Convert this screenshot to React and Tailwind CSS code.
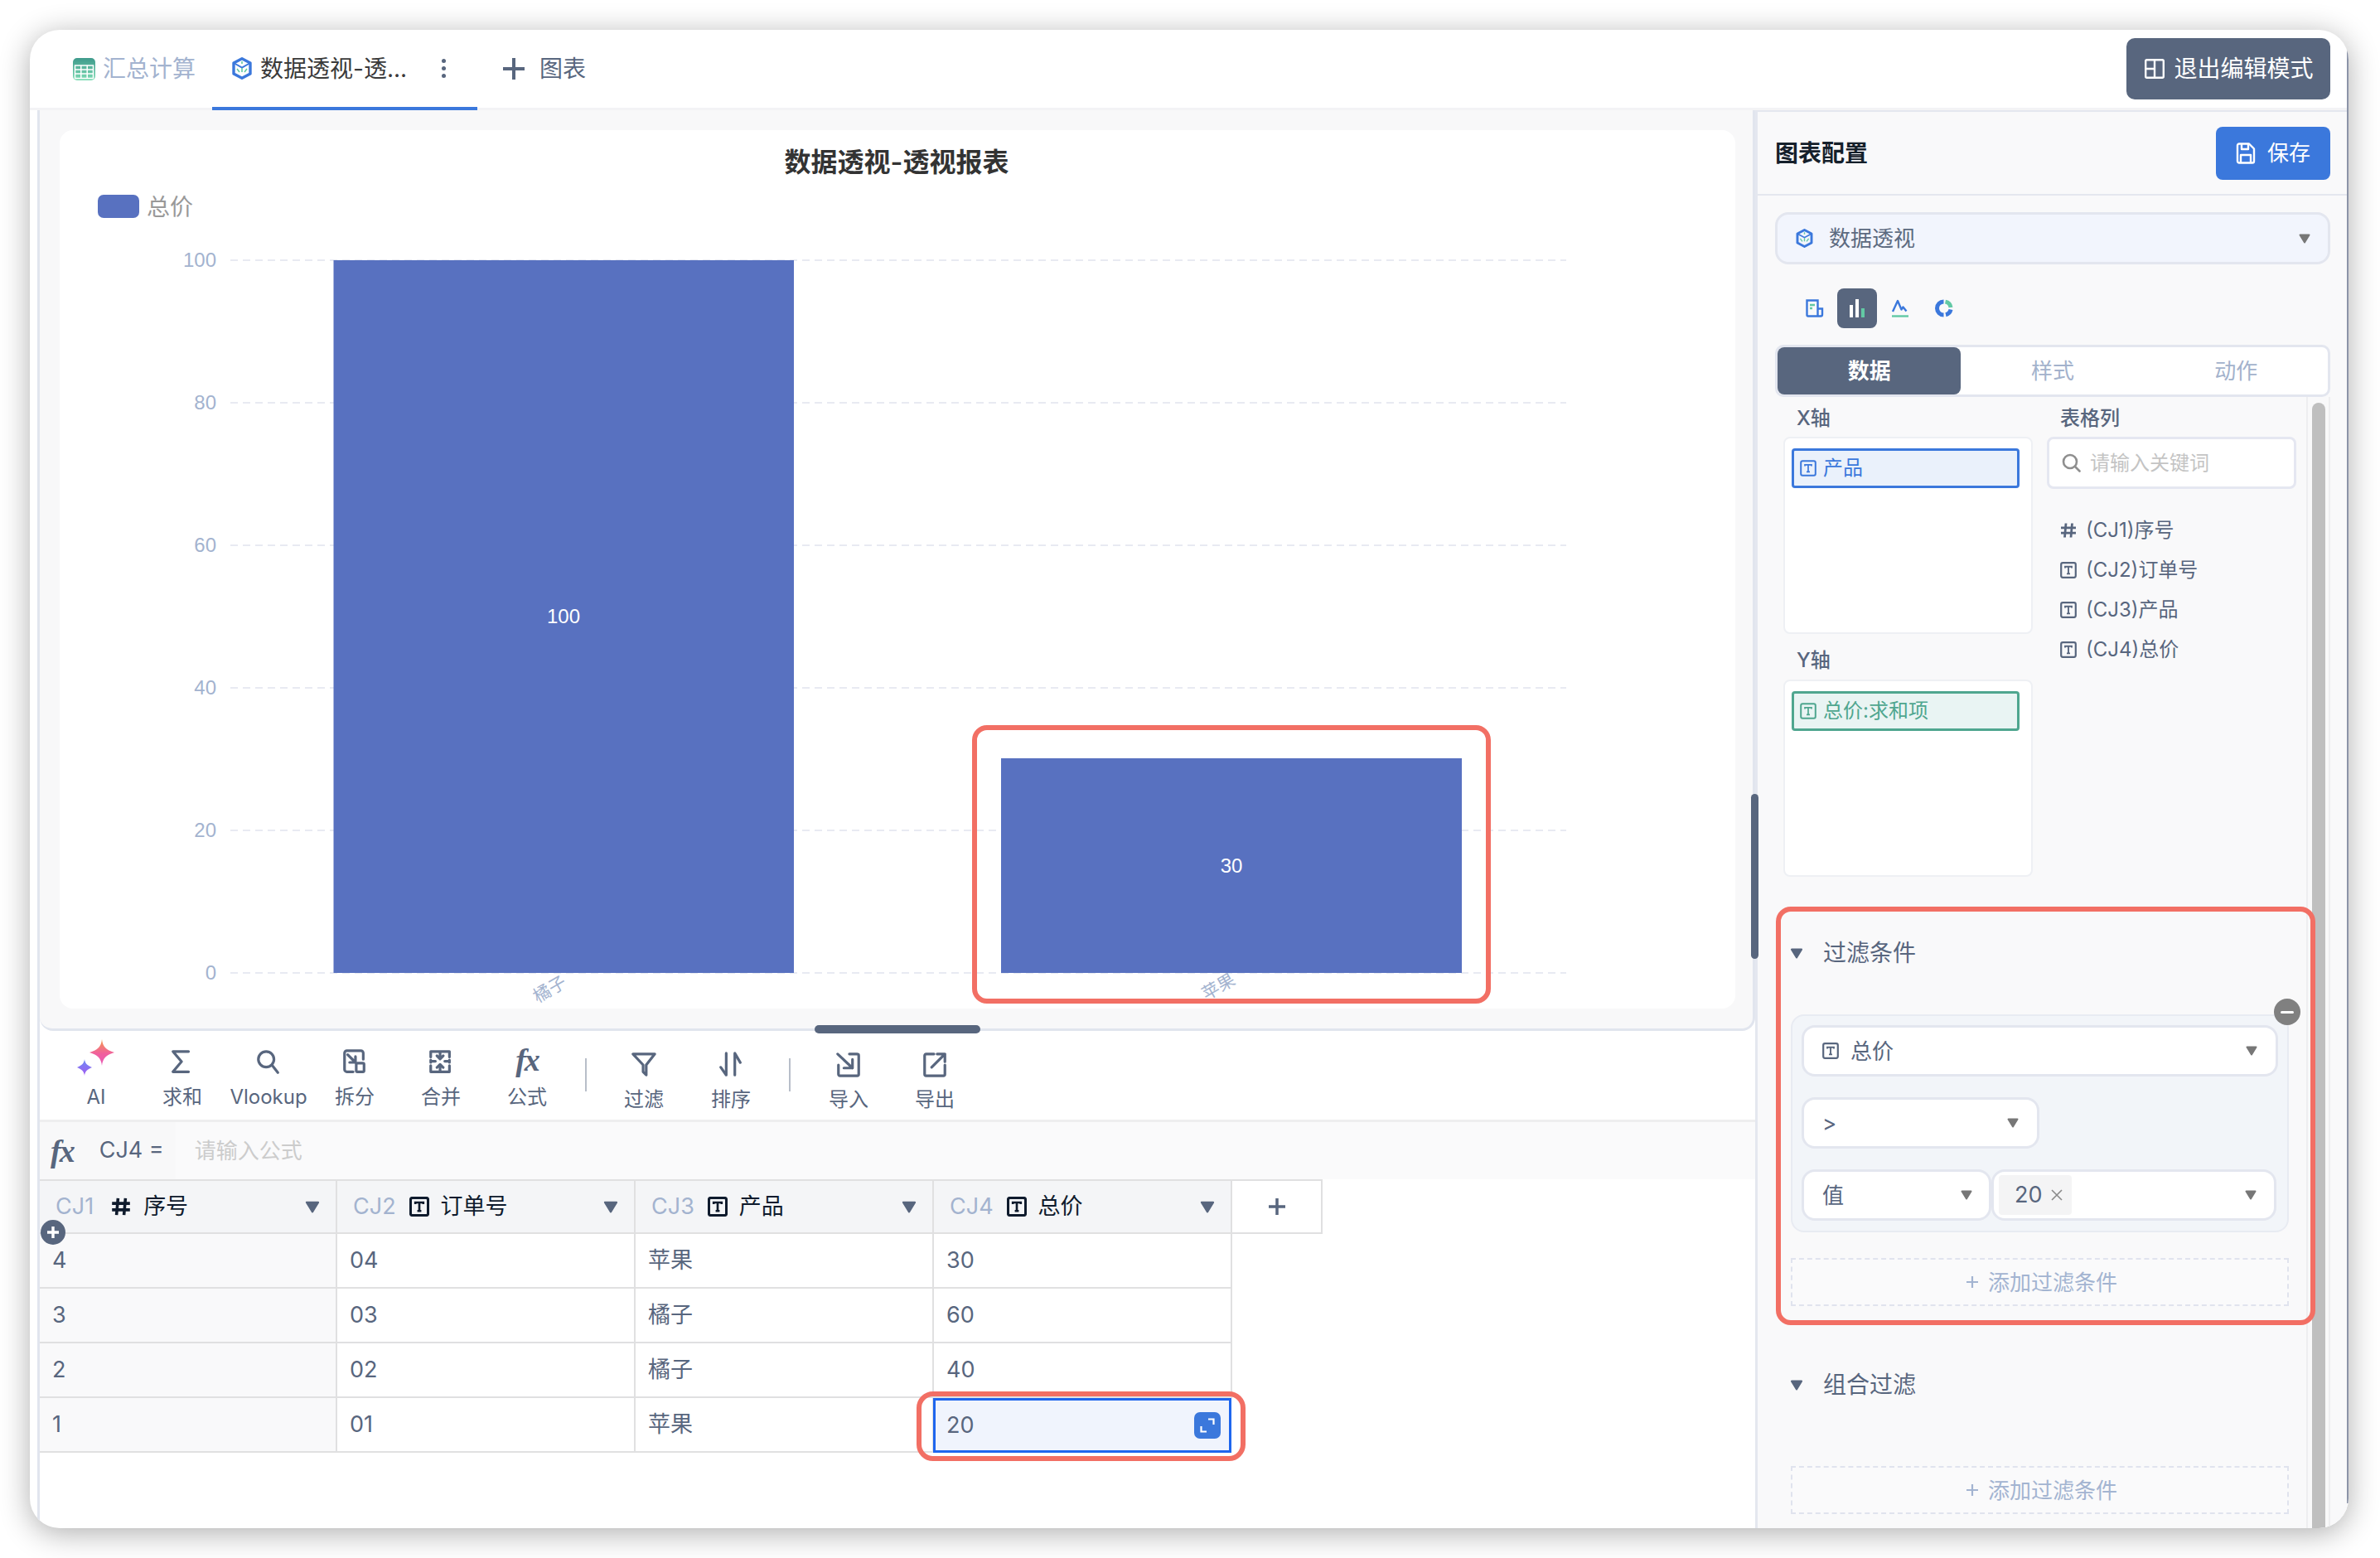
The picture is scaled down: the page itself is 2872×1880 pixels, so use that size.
const slate = "#58667e";

function TIcon({ size = 20, weight = 2 }) {
  return (
    <svg width={size} height={size} viewBox="0 0 20 20" fill="none" stroke="currentColor" strokeWidth={weight} className="shrink-0">
      <rect x="1.2" y="1.2" width="17.6" height="17.6" rx="2" />
      <path d="M6 7.6V5.8h8v1.8M10 5.8v8.6M8 14.4h4" strokeWidth={weight * 0.85} />
    </svg>
  );
}

function HashIcon({ size = 20, weight = 2.8 }) {
  return (
    <svg width={size} height={size} viewBox="0 0 20 20" fill="none" stroke="currentColor" strokeWidth={weight} className="shrink-0">
      <path d="M7 1.5 5.5 18.5M14.5 1.5 13 18.5M1 6.8h18M1 13.2h18" />
    </svg>
  );
}

function Caret({ w = 14, h = 12, color = "#777777" }) {
  return (
    <svg width={w} height={h} viewBox="0 0 14 12" className="shrink-0">
      <path d="M1.5 1.5h11L7 10.5Z" fill={color} stroke={color} strokeWidth="2" strokeLinejoin="round" />
    </svg>
  );
}

function CubeIcon({ w = 24, h = 27 }) {
  return (
    <svg width={w} height={h} viewBox="0 0 24 27" fill="none" className="shrink-0">
      <path d="M12 1.8 22 7v13l-10 5.2L2 20V7Z" stroke="#3b78dc" strokeWidth="3.400" strokeLinejoin="round" />
      <path d="M3 7.5 12 12.5 21 7.5" stroke="#3b78dc" strokeWidth="2" />
      <path d="M12 13v5M6 14l3 4M18 14l-3 4M12 5v3" stroke="#62c9a4" strokeWidth="1.6" />
    </svg>
  );
}

function SheetIcon() {
  return (
    <svg width="27" height="27" viewBox="0 0 27 27" className="shrink-0">
      <defs>
        <linearGradient id="sheet" x1="0" y1="0" x2="0" y2="1">
          <stop offset="0" stopColor="#3f9a8c" />
          <stop offset="1" stopColor="#7edcb4" />
        </linearGradient>
      </defs>
      <rect width="27" height="27" rx="5" fill="url(#sheet)" />
      <path d="M2.5 9h22v15.5h-22zM2.5 14h22M2.5 19h22M9.8 9v15.5M17.2 9v15.5" fill="none" stroke="#ffffff" strokeWidth="1.5" />
    </svg>
  );
}

function Sparkle() {
  return (
    <svg width="46" height="44" viewBox="0 0 46 44">
      <defs>
        <linearGradient id="star1" x1="0" y1="0" x2="0" y2="1">
          <stop offset="0" stopColor="#f59a4a" />
          <stop offset="0.55" stopColor="#f0609e" />
          <stop offset="1" stopColor="#e85ab8" />
        </linearGradient>
        <linearGradient id="star2" x1="0" y1="0" x2="0" y2="1">
          <stop offset="0" stopColor="#6c8cf5" />
          <stop offset="1" stopColor="#a35af0" />
        </linearGradient>
      </defs>
      <path d="M30 0C31 9 35 13 45 16 35 19 31 23 30 32 29 23 25 19 15 16 25 13 29 9 30 0Z" fill="url(#star1)" />
      <path d="M9 24C9.6 29 12 31.5 18 34 12 36.5 9.6 39 9 44 8.4 39 6 36.5 0 34 6 31.5 8.4 29 9 24Z" fill="url(#star2)" />
    </svg>
  );
}

function ToolIcon({ name }) {
  const paths = {
    sum: <path d="M24 3H4l11 13L4 29h20" />,
    search: (
      <>
        <circle cx="13" cy="13" r="10" />
        <path d="M20.5 20.5 28 30" />
      </>
    ),
    split: (
      <>
        <path d="M14 29H6a3 3 0 0 1-3-3V5a3 3 0 0 1 3-3h18a3 3 0 0 1 3 3v8" />
        <path d="M7 7l10 10M17 9.500V17H9.500" />
        <rect x="18" y="18" width="10" height="11" rx="1.500" />
      </>
    ),
    merge: (
      <>
        <path d="M3 10V3h24v7M3 21v8h24v-8M3 14v3M27 14v3M3 15.500h6M21 15.500h6" />
        <path d="M15 4v8M11 8.500l4 4 4-4M15 28v-8M11 23.500l4-4 4 4" />
      </>
    ),
    filter: <path d="M2 3h28L19 17v13l-4-4V17Z" />,
    sort: <path d="M10 2v28L3 20M21 30V2l7 12" />,
    import: <path d="M17 3h10a2 2 0 0 1 2 2v24a2 2 0 0 1-2 2H5a2 2 0 0 1-2-2V17M2 3l19 18M21 10v11H10" />,
    export: <path d="M15 3H5a2 2 0 0 0-2 2v24a2 2 0 0 0 2 2h22a2 2 0 0 0 2-2V17M12 20 29 3M19 3h10v10" />,
  };
  return (
    <svg width="32" height="32" viewBox="0 0 32 34" fill="none" stroke={slate} strokeWidth="3.400" strokeLinejoin="round" strokeLinecap="round">
      {paths[name]}
    </svg>
  );
}

function FxMark({ size = "text-[38px]" }) {
  return <span className={`font-['Liberation_Serif',serif] italic font-bold ${size} leading-none text-[#58667e] tracking-[-2px]`}>fx</span>;
}

function ToolItem({ label, name, low }) {
  return (
    <div className={`w-[104px] flex flex-col items-center ${low ? "pt-[25px]" : "pt-[22px]"}`}>
      <div className="h-[32px] flex items-end justify-center">
        {name === "ai" ? <Sparkle /> : name === "fx" ? <FxMark /> : <ToolIcon name={name} />}
      </div>
      <span className="mt-[10px] text-[24px] leading-[32px] text-[#58667e]">{label}</span>
    </div>
  );
}

function Chart() {
  const grid = [
    { y: 1017, label: "0" },
    { y: 845, label: "20" },
    { y: 673, label: "40" },
    { y: 501, label: "60" },
    { y: 329, label: "80" },
    { y: 157, label: "100" },
  ];
  const sans = "Inter, 'Noto Sans CJK SC', sans-serif";
  return (
    <svg width="2022" height="1060" viewBox="0 0 2022 1060" fontFamily={sans}>
      <text x="1010" y="50" textAnchor="middle" fontSize="32" fontWeight="600" fill="#333333">数据透视-透视报表</text>
      <rect x="46" y="78" width="50" height="28" rx="7" fill="#5871c0" />
      <text x="105" y="103" fontSize="28" fill="#999999">总价</text>
      {grid.map((g) => (
        <g key={g.label}>
          <line x1="206" x2="1818" y1={g.y} y2={g.y} stroke="#e8eaf2" strokeWidth="2" strokeDasharray="9 6" />
          <text x="189" y={g.y + 8} textAnchor="end" fontSize="24" fontFamily="'Liberation Sans', sans-serif" fill="#a3b3cf">{g.label}</text>
        </g>
      ))}
      <rect x="330.500" y="157" width="555.500" height="860" fill="#5871c0" />
      <rect x="1136" y="758" width="556" height="259" fill="#5871c0" />
      <text x="608" y="595" textAnchor="middle" fontSize="24" fontFamily="'Liberation Sans', sans-serif" fill="#ffffff">100</text>
      <text x="1414" y="896" textAnchor="middle" fontSize="24" fontFamily="'Liberation Sans', sans-serif" fill="#ffffff">30</text>
      <text x="591" y="1044" textAnchor="middle" fontSize="21" fill="#a3b3cf" transform="rotate(-30 591 1036)">橘子</text>
      <text x="1398" y="1041" textAnchor="middle" fontSize="21" fill="#a3b3cf" transform="rotate(-30 1398 1033)">苹果</text>
    </svg>
  );
}

const columns = [
  { id: "CJ1", name: "序号", w: "w-[359px]", hash: true },
  { id: "CJ2", name: "订单号", w: "w-[360px]" },
  { id: "CJ3", name: "产品", w: "w-[360px]" },
  { id: "CJ4", name: "总价", w: "w-[360px]" },
];

const rows = [
  ["4", "04", "苹果", "30"],
  ["3", "03", "橘子", "60"],
  ["2", "02", "橘子", "40"],
  ["1", "01", "苹果", "20"],
];

function DataTable() {
  return (
    <div className="relative">
      <div className="flex w-fit h-[66px] border-t-2 border-b-2 border-[#e0e0e1]">
        {columns.map((c) => (
          <div key={c.id} className={`${c.w} bg-[#f4f5f7] border-r-2 border-[#e0e0e1] flex items-center pl-[19px] pr-[19px] text-[#0f1b2d]`}>
            <span className="text-[27px] text-[#a3b3cf]">{c.id}</span>
            <span className={c.hash ? "ml-[21px] mr-[15px]" : "ml-[16px] mr-[14px]"}>{c.hash ? <HashIcon size={24} weight={3} /> : <TIcon size={24} weight={2.6} />}</span>
            <span className="text-[27px]">{c.name}</span>
            <span className="ml-auto"><Caret w={18} h={15} color={slate} /></span>
          </div>
        ))}
        <div className="w-[109px] border-r-2 border-[#e0e0e1] flex items-center justify-center">
          <svg width="20" height="20" viewBox="0 0 20 20" stroke={slate} strokeWidth="3.500"><path d="M10 0v20M0 10h20" /></svg>
        </div>
      </div>
      {rows.map((r, i) => (
        <div key={r[0]} className="flex h-[66px]">
          {r.map((v, j) => {
            const selected = i === 3 && j === 3;
            return (
              <div
                key={j}
                className={`${columns[j].w} flex items-center text-[27px] text-[#58667e] ${
                  selected
                    ? "relative border-[3px] border-[#1f66ee] bg-[#f0f4fd] pr-[10px] justify-between -ml-[1px] pl-[13px]"
                    : `pl-[15px] border-r-2 border-b-2 border-[#e0e0e1] ${j === 0 ? "bg-[#f9f9fa]" : ""}`
                }`}
              >
                <span>{v}</span>
                {selected && (
                  <span className="w-[32px] h-[32px] rounded-[7px] bg-[#3b78dc] flex items-center justify-center">
                    <svg width="20" height="20" viewBox="0 0 20 20" fill="none" stroke="#ffffff" strokeWidth="2.200"><path d="M11 2.500h6.500V9M9 17.500H2.500V11" /></svg>
                  </span>
                )}
              </div>
            );
          })}
        </div>
      ))}
      {/* add-row dot sits over the header line */}
      <div className="absolute left-[1px] top-[49px] w-[30px] h-[30px] rounded-full bg-[#58667e] flex items-center justify-center">
        <svg width="16" height="16" viewBox="0 0 16 16" stroke="#ffffff" strokeWidth="3.400"><path d="M8 1v14M1 8h14" /></svg>
      </div>
      {/* annotation round the selected cell */}
      <div className="absolute left-[1058px] top-[256px] w-[397px] h-[84px] rounded-[20px] border-[6px] border-[#f26f64]" />
    </div>
  );
}

function Select({ className = "", children }) {
  return (
    <div className={`h-[62px] rounded-[16px] bg-white border-[3px] border-[#e3e6ef] flex items-center justify-between ${className}`}>
      {children}
    </div>
  );
}

function AddButton() {
  return (
    <div className="w-[601px] h-[58px] ml-[19px] border-[2px] border-dashed border-[#e0e3ee] bg-[#fafafb] flex items-center justify-center gap-[11px] pl-[4px] text-[26px] text-[#a3b4d1]">
      <svg width="16" height="16" viewBox="0 0 16 16" stroke="#a3b4d1" strokeWidth="2.200"><path d="M8 1v14M1 8h14" /></svg>
      <span>添加过滤条件</span>
    </div>
  );
}

function SectionTitle({ children, className = "" }) {
  return (
    <div className={`flex items-center h-[40px] pl-[18px] ${className}`}>
      <Caret w={16} h={13} color={slate} />
      <span className="ml-[24px] text-[28px] text-[#58667e]">{children}</span>
    </div>
  );
}

function FieldBox({ tone, label }) {
  return (
    <div className="w-[301px] h-[238px] bg-white border-2 border-[#eef0f4] rounded-[8px] pt-[12px] pl-[8px]">
      <div className={`w-[275px] h-[48px] rounded-[4px] border-[3px] flex items-center pl-[7px] gap-[8px] text-[24px] ${tone}`}>
        <TIcon size={20} weight={2} />
        <span>{label}</span>
      </div>
    </div>
  );
}

function Sidebar() {
  const list = [
    { label: "(CJ1)序号", hash: true },
    { label: "(CJ2)订单号" },
    { label: "(CJ3)产品" },
    { label: "(CJ4)总价" },
  ];
  return (
    <div className="relative w-[716px] h-full flex flex-col bg-[#f9f9fa] border-l-[3px] border-[#e4e7ef]">
      <div className="h-[103px] shrink-0 border-t-2 border-b-2 border-[#e4e7ef] flex items-center justify-between pl-[21px] pr-[22px]">
        <span className="text-[28px] font-semibold text-[#15202b]">图表配置</span>
        <div className="w-[138px] h-[64px] rounded-[8px] bg-[#3b78dc] flex items-center justify-center gap-[14px] text-white text-[26px]">
          <svg width="24" height="26" viewBox="0 0 24 26" fill="none" stroke="#ffffff" strokeWidth="2.400" strokeLinejoin="round">
            <path d="M2 3.500A2 2 0 0 1 4 1.500h12l6 6v15a2 2 0 0 1-2 2H4a2 2 0 0 1-2-2Z" />
            <path d="M7 2v6h8V2M6 24.500V15h12v9.500" />
          </svg>
          <span>保存</span>
        </div>
      </div>

      <div className="ml-[21px] mt-[20px] w-[670px] h-[63px] shrink-0 rounded-[16px] bg-[#f2f5fd] border-[3px] border-[#e3e6ef] flex items-center pl-[22px] pr-[21px] text-[26px] text-[#5c6a80]">
        <CubeIcon w={21} h={23} />
        <span className="ml-[19px]">数据透视</span>
        <span className="ml-auto"><Caret w={14} h={14} /></span>
      </div>

      <div className="ml-[58px] mt-[29px] h-[48px] shrink-0 flex items-center">
        <svg width="22" height="22" viewBox="0 0 22 22" fill="none" className="mr-[16px]">
          <path d="M14.500 20.500H3a1.500 1.500 0 0 1-1.500-1.500V1.500H14.500V20.500ZM14.500 11.500h5.500v7a2 2 0 0 1-2 2h-3.500" stroke="#3b78dc" strokeWidth="2.400" />
          <path d="M5 7h6M5 11h3" stroke="#62c9a4" strokeWidth="2.400" />
        </svg>
        <div className="w-[48px] h-[48px] rounded-[8px] bg-[#58667e] flex items-center justify-center">
          <svg width="20" height="22" viewBox="0 0 20 22">
            <rect x="1" y="7" width="4" height="15" fill="#ffffff" />
            <rect x="8" y="0" width="4" height="22" fill="#ffffff" />
            <rect x="15" y="11" width="4" height="11" fill="#62c9a4" />
          </svg>
        </div>
        <svg width="22" height="22" viewBox="0 0 22 22" fill="none" className="ml-[17px]">
          <path d="M2 15 8 2l4.500 10.500 2-3 4 5" stroke="#3b78dc" strokeWidth="2.400" strokeLinejoin="round" />
          <path d="M1 20.500h20" stroke="#62c9a4" strokeWidth="2.400" />
        </svg>
        <svg width="22" height="22" viewBox="0 0 22 22" fill="none" strokeWidth="5" className="ml-[31px]">
          <path d="M12.500 3.100A8 8 0 0 1 19 10" stroke="#62c9a4" />
          <path d="M19 12.500A8 8 0 0 1 13 18.700" stroke="#3b78dc" />
          <path d="M10.500 19A8 8 0 0 1 10.500 3" stroke="#3b78dc" />
        </svg>
      </div>

      <div className="ml-[21px] mt-[20px] w-[670px] h-[63px] shrink-0 rounded-[10px] bg-white border-[3px] border-[#e3e6ef] flex text-[26px] text-[#a3b2cc]">
        <div className="w-[222px] bg-[#58667e] rounded-[8px] text-white font-semibold flex items-center justify-center">数据</div>
        <div className="w-[222px] flex items-center justify-center">样式</div>
        <div className="w-[222px] flex items-center justify-center">动作</div>
      </div>

      <div className="flex flex-1 min-h-0 overflow-hidden">
        <div className="w-[641px] ml-[21px] shrink-0">
          <div className="pl-[10px] flex gap-[17px] h-[580px]">
            <div>
              <div className="h-[48px] pt-[4px] pl-[16px] flex items-center text-[24px] font-medium text-[#58667e]">X轴</div>
              <FieldBox tone="border-[#3b78dc] bg-[#eaf1fb] text-[#3b78dc]" label="产品" />
              <div className="h-[55px] pt-[9px] pl-[16px] flex items-center text-[24px] font-medium text-[#58667e]">Y轴</div>
              <FieldBox tone="border-[#4fa68f] bg-[#e9f4f3] text-[#4fa68f]" label="总价:求和项" />
            </div>
            <div>
              <div className="h-[48px] pt-[4px] pl-[16px] flex items-center text-[24px] font-medium text-[#58667e]">表格列</div>
              <div className="w-[301px] h-[63px] bg-white border-[3px] border-[#e5e7f1] rounded-[8px] flex items-center pl-[15px] gap-[11px] text-[24px] text-[#c4c4c4]">
                <svg width="23" height="23" viewBox="0 0 23 23" fill="none" stroke="#8f8f8f" strokeWidth="2.600" strokeLinecap="round">
                  <circle cx="10" cy="10" r="8" />
                  <path d="m16 16 5.500 5.500" />
                </svg>
                <span>请输入关键词</span>
              </div>
              <div className="mt-[26px]">
                {list.map((item) => (
                  <div key={item.label} className="h-[48px] pl-[16px] flex items-center gap-[11px] text-[24px] text-[#58667e]">
                    {item.hash ? <HashIcon size={20} /> : <TIcon size={20} weight={2.2} />}
                    <span>{item.label}</span>
                  </div>
                ))}
              </div>
            </div>
          </div>

          <SectionTitle className="mt-[71px]">过滤条件</SectionTitle>
          <div className="relative ml-[19px] mt-[54px] w-[601px] h-[263px] rounded-[16px] bg-[#f2f5f9] border-[2px] border-[#e8ebf2] pt-[11px] pl-[11px] flex flex-col gap-[25px] text-[26px] text-[#58667e]">
            <Select className="w-[575px] pl-[22px] pr-[22px]">
              <span className="flex items-center gap-[14px]"><TIcon size={20} weight={2.2} />总价</span>
              <Caret />
            </Select>
            <Select className="w-[287px] pl-[22px] pr-[22px]">
              <span>&gt;</span>
              <Caret />
            </Select>
            <div className="flex">
              <Select className="w-[229px] pl-[22px] pr-[20px]">
                <span>值</span>
                <Caret />
              </Select>
              <Select className="w-[344px] pl-[6px] pr-[21px]">
                <span className="w-[88px] h-[48px] rounded-[4px] bg-[#f4f4f5] flex items-center pl-[19px] gap-[10px] text-[27px]">
                  20
                  <svg width="14" height="14" viewBox="0 0 14 14" stroke="#8a8a8a" strokeWidth="1.600"><path d="m1 1 12 12M13 1 1 13" /></svg>
                </span>
                <Caret />
              </Select>
            </div>
            <div className="absolute -right-[16px] -top-[21px] w-[32px] h-[32px] rounded-full bg-[#808080] flex items-center justify-center">
              <span className="w-[16px] h-[3px] bg-white rounded-full" />
            </div>
          </div>
          <div className="mt-[31px]"><AddButton /></div>
          <SectionTitle className="mt-[75px]">组合过滤</SectionTitle>
          <div className="mt-[78px]"><AddButton /></div>
        </div>

        <div className="w-[29px] shrink-0 border-x-2 border-[#eeeef0] pl-[5px] pt-[7px]">
          <div className="w-[16px] h-[1400px] rounded-t-full bg-[#bfbfbf]" />
        </div>
      </div>

      {/* annotation round the filter section */}
      <div className="absolute left-[22px] top-[961px] w-[651px] h-[505px] rounded-[18px] border-[6px] border-[#f26f64]" />
    </div>
  );
}

export default function App() {
  return (
    <div className="w-[2872px] h-[1880px] bg-white pt-[36px] pl-[36px] overflow-hidden font-['Inter','Noto_Sans_CJK_SC',sans-serif]">
      <div className="relative w-[2798px] h-[1808px] rounded-[36px] overflow-hidden bg-white flex flex-col shadow-[0_6px_36px_rgba(0,0,0,0.32)]">
        <div className="h-[97px] shrink-0 border-b-[3px] border-[#f3f3f5] flex items-stretch pl-[52px] pr-[22px]">
          <div className="w-[168px] flex items-center text-[28px] text-[#a3b3cf] gap-[9px]">
            <SheetIcon />
            <span>汇总计算</span>
          </div>
          <div className="w-[320px] -mb-[3px] border-b-[4px] border-[#3b78dc] flex items-center pl-[24px] text-[28px] text-[#3a3a3a]">
            <CubeIcon />
            <span className="ml-[10px]">数据透视-透...</span>
            <span className="ml-[42px] flex flex-col gap-[4px]">
              <i className="w-[5px] h-[5px] rounded-full bg-[#58667e]" />
              <i className="w-[5px] h-[5px] rounded-full bg-[#58667e]" />
              <i className="w-[5px] h-[5px] rounded-full bg-[#58667e]" />
            </span>
          </div>
          <div className="ml-[31px] flex items-center gap-[18px] text-[28px] text-[#58667e]">
            <svg width="26" height="26" viewBox="0 0 26 26" stroke="#58667e" strokeWidth="4"><path d="M13 0v26M0 13h26" /></svg>
            <span>图表</span>
          </div>
          <div className="ml-auto mt-[10px] w-[246px] h-[74px] rounded-[10px] bg-[#58667e] flex items-center justify-center gap-[11px] pl-[2px] text-white text-[28px]">
            <svg width="24" height="24" viewBox="0 0 24 24" fill="none" stroke="#ffffff" strokeWidth="2.400">
              <rect x="1.200" y="1.200" width="21.600" height="21.600" rx="1.500" />
              <path d="M12 1v22M1 12h11" />
            </svg>
            <span>退出编辑模式</span>
          </div>
        </div>

        <div className="flex flex-1 min-h-0">
          <div className="relative z-10 w-[2082px] shrink-0 pl-[9px]">
            <div className="h-full border-l-[3px] border-[#e1e5ee] flex flex-col">
              <div className="relative h-[1111px] shrink-0 bg-[#f8f8f9] border-b-[3px] border-r-[3px] border-[#e1e5ee] rounded-bl-[16px] rounded-br-[16px] pt-[24px] pl-[24px]">
                <div className="relative w-[2022px] h-[1060px] bg-white rounded-[16px]">
                  <Chart />
                  <div className="absolute left-[1101px] top-[718px] w-[626px] h-[336px] rounded-[18px] border-[6px] border-[#f26f64]" />
                </div>
                <div className="absolute left-[935px] -bottom-[6px] w-[200px] h-[10px] rounded-full bg-[#58667e]" />
                <div className="absolute -right-[7px] top-[825px] w-[9px] h-[199px] rounded-full bg-[#58667e]" />
              </div>

              <div className="h-[110px] shrink-0 border-b-[3px] border-[#eeeeef] flex pl-[16px]">
                <ToolItem label="AI" name="ai" />
                <ToolItem label="求和" name="sum" />
                <ToolItem label="Vlookup" name="search" />
                <ToolItem label="拆分" name="split" />
                <ToolItem label="合并" name="merge" />
                <ToolItem label="公式" name="fx" />
                <div className="mt-[33px] ml-[18px] mr-[17px] w-[2px] h-[40px] bg-[#b8bec9]" />
                <ToolItem label="过滤" name="filter" low />
                <div className="w-[1px]" />
                <ToolItem label="排序" name="sort" low />
                <div className="mt-[33px] ml-[18px] mr-[18px] w-[2px] h-[40px] bg-[#b8bec9]" />
                <ToolItem label="导入" name="import" low />
                <ToolItem label="导出" name="export" low />
              </div>

              <div className="h-[69px] shrink-0 bg-[#f8f8f9] flex items-center pl-[13px]">
                <FxMark />
                <span className="ml-[31px] text-[27px] text-[#58667e]">CJ4 =</span>
                <span className="ml-[14px] pl-[23px] h-full flex items-center flex-1 bg-[#fafafb] text-[26px] text-[#cccccc]">请输入公式</span>
              </div>

              <DataTable />
            </div>
          </div>
          <Sidebar />
        </div>

        <div className="absolute right-0 top-[24px] bottom-[30px] w-[2px] bg-[#8c94a8]" />
      </div>
    </div>
  );
}
